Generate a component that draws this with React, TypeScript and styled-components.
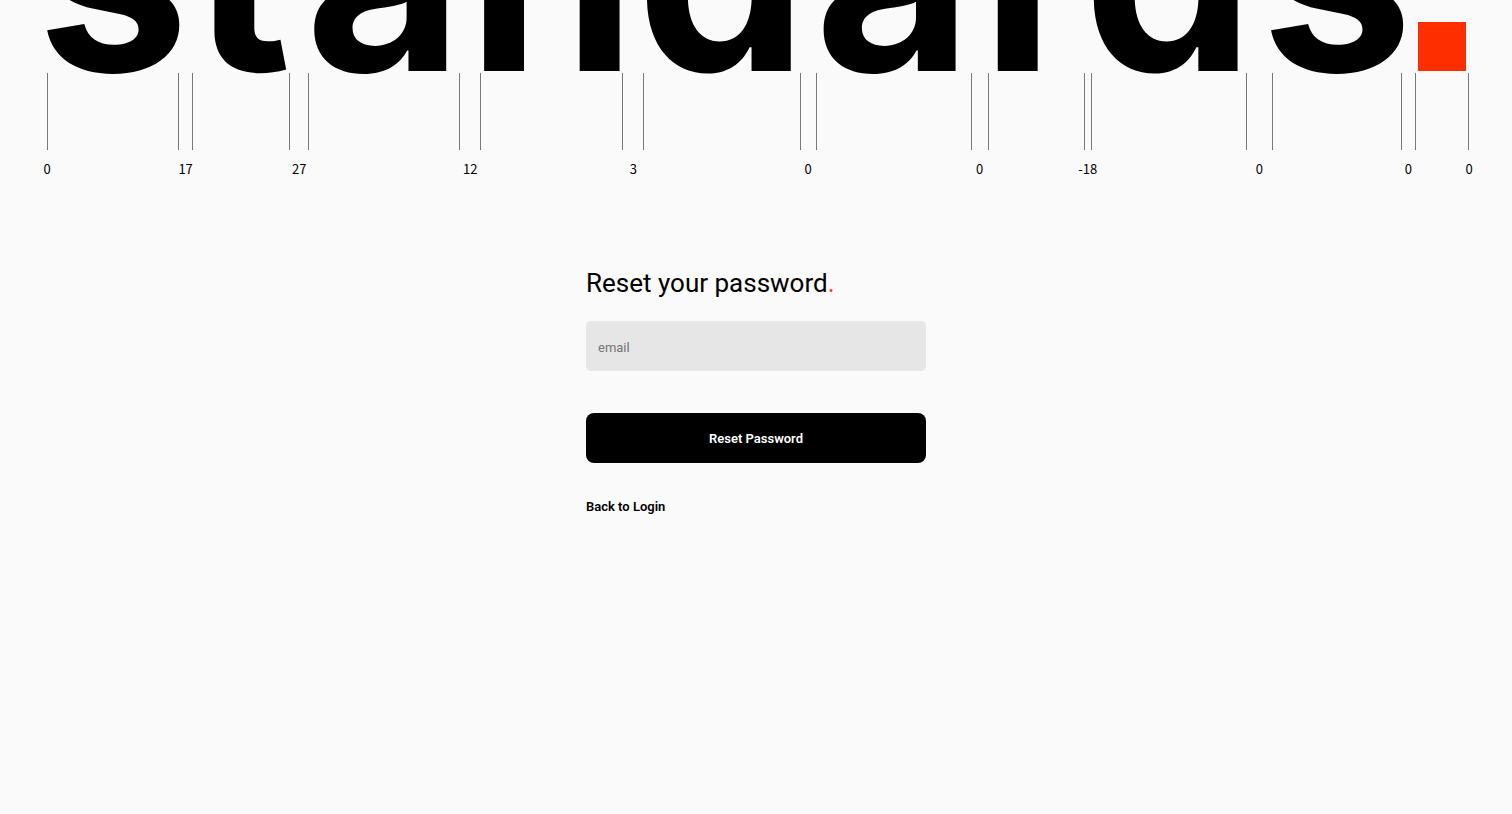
import React from "react";
import styled, { createGlobalStyle } from "styled-components";

const GlobalStyle = createGlobalStyle`
  *, *::before, *::after { box-sizing: border-box; }
  body {
    margin: 0;
    min-height: 100vh;
    background: #fafafa;
    color: #000;
    font-family: Roboto, "Liberation Sans", sans-serif;
    overflow-x: hidden;
  }
`;

/* Glyph widths of the wordmark, with the kerning gap that follows each one. */
const glyphs = [
  { char: "s", width: 132, gap: 13, kern: "17" },
  { char: "t", width: 98, gap: 18, kern: "27" },
  { char: "a", width: 152, gap: 20, kern: "12" },
  { char: "n", width: 143, gap: 20, kern: "3" },
  { char: "d", width: 157, gap: 15, kern: "0" },
  { char: "a", width: 156, gap: 16, kern: "0" },
  { char: "r", width: 97, gap: 6, kern: "-18" },
  { char: "d", width: 156, gap: 25, kern: "0" },
  { char: "s", width: 130, gap: 13, kern: "0" },
  { char: ".", width: 54, gap: 0, kern: "0" },
];

const columns = glyphs
  .map((g) => `minmax(0, ${g.width}fr) minmax(0, ${g.gap}fr)`)
  .join(" ");

const KerningRow = styled.div`
  display: grid;
  grid-template-columns: 0 ${columns};
  padding: 0 43px 0 47px;
`;

const Wordmark = styled(KerningRow)`
  grid-template-rows: 71px;
  align-items: end;
  font-family: Inter, "Liberation Sans", sans-serif;
  font-size: 18vw;
  font-weight: 700;
  line-height: 0.72;
`;

const Letter = styled.span<{ $column: number }>`
  grid-column: ${(p) => p.$column};
  display: flex;
  justify-content: center;
`;

const Stop = styled.span<{ $column: number }>`
  grid-column: ${(p) => p.$column};
  justify-self: center;
  width: 90%;
  aspect-ratio: 1;
  background: #ff2e00;
`;

const Ruler = styled(KerningRow)`
  height: 79px;
  padding-top: 2px;
`;

const Bearings = styled.span<{ $column: number }>`
  grid-column: ${(p) => p.$column};
  border: solid #777;
  border-width: 0 1px;
`;

const Values = styled(KerningRow)`
  margin-top: 9px;
  font-family: "Noto Sans CJK JP", sans-serif;
  font-size: 13px;
  line-height: 20px;
`;

const Value = styled.span<{ $column: number }>`
  grid-column: ${(p) => p.$column};
  display: flex;
  justify-content: center;
  white-space: nowrap;
`;

const Form = styled.form`
  display: flex;
  flex-direction: column;
  width: 100%;
  max-width: 340px;
  margin: 84px auto 0;
`;

const Title = styled.h1`
  margin: 0 0 18px;
  font-size: 26px;
  font-weight: 400;
  line-height: 40px;
`;

const Accent = styled.span`
  color: #ff2e00;
`;

const Field = styled.input`
  height: 50px;
  padding: 2px 12px 0;
  border: 0;
  border-radius: 5px;
  background: #e6e6e6;
  font: inherit;
  font-size: 13px;
  &::placeholder { color: #757575; }
`;

const Submit = styled.button`
  height: 50px;
  margin-top: 42px;
  border: 0;
  border-radius: 8px;
  background: #000;
  color: #fff;
  font: inherit;
  font-size: 13px;
  font-weight: 600;
  cursor: pointer;
`;

const BackLink = styled.a`
  align-self: flex-start;
  margin-top: 34px;
  color: #000;
  font-size: 13px;
  font-weight: 600;
  line-height: 20px;
  text-decoration: none;
`;

export default function App() {
  return (
    <>
      <GlobalStyle />
      <header>
        <Wordmark>
          {glyphs.map((g, i) =>
            g.char === "." ? (
              <Stop key={i} $column={2 * i + 2} />
            ) : (
              <Letter key={i} $column={2 * i + 2}>{g.char}</Letter>
            )
          )}
        </Wordmark>
        <Ruler>
          {glyphs.map((_, i) => (
            <Bearings key={i} $column={2 * i + 2} />
          ))}
        </Ruler>
        <Values>
          <Value $column={1}>0</Value>
          {glyphs.map((g, i) => (
            <Value key={i} $column={2 * i + 3}>{g.kern}</Value>
          ))}
        </Values>
      </header>
      <main>
        <Form onSubmit={(e) => e.preventDefault()}>
          <Title>
            Reset your password<Accent>.</Accent>
          </Title>
          <Field type="email" name="email" placeholder="email" aria-label="email" />
          <Submit type="submit">Reset Password</Submit>
          <BackLink href="#login">Back to Login</BackLink>
        </Form>
      </main>
    </>
  );
}
